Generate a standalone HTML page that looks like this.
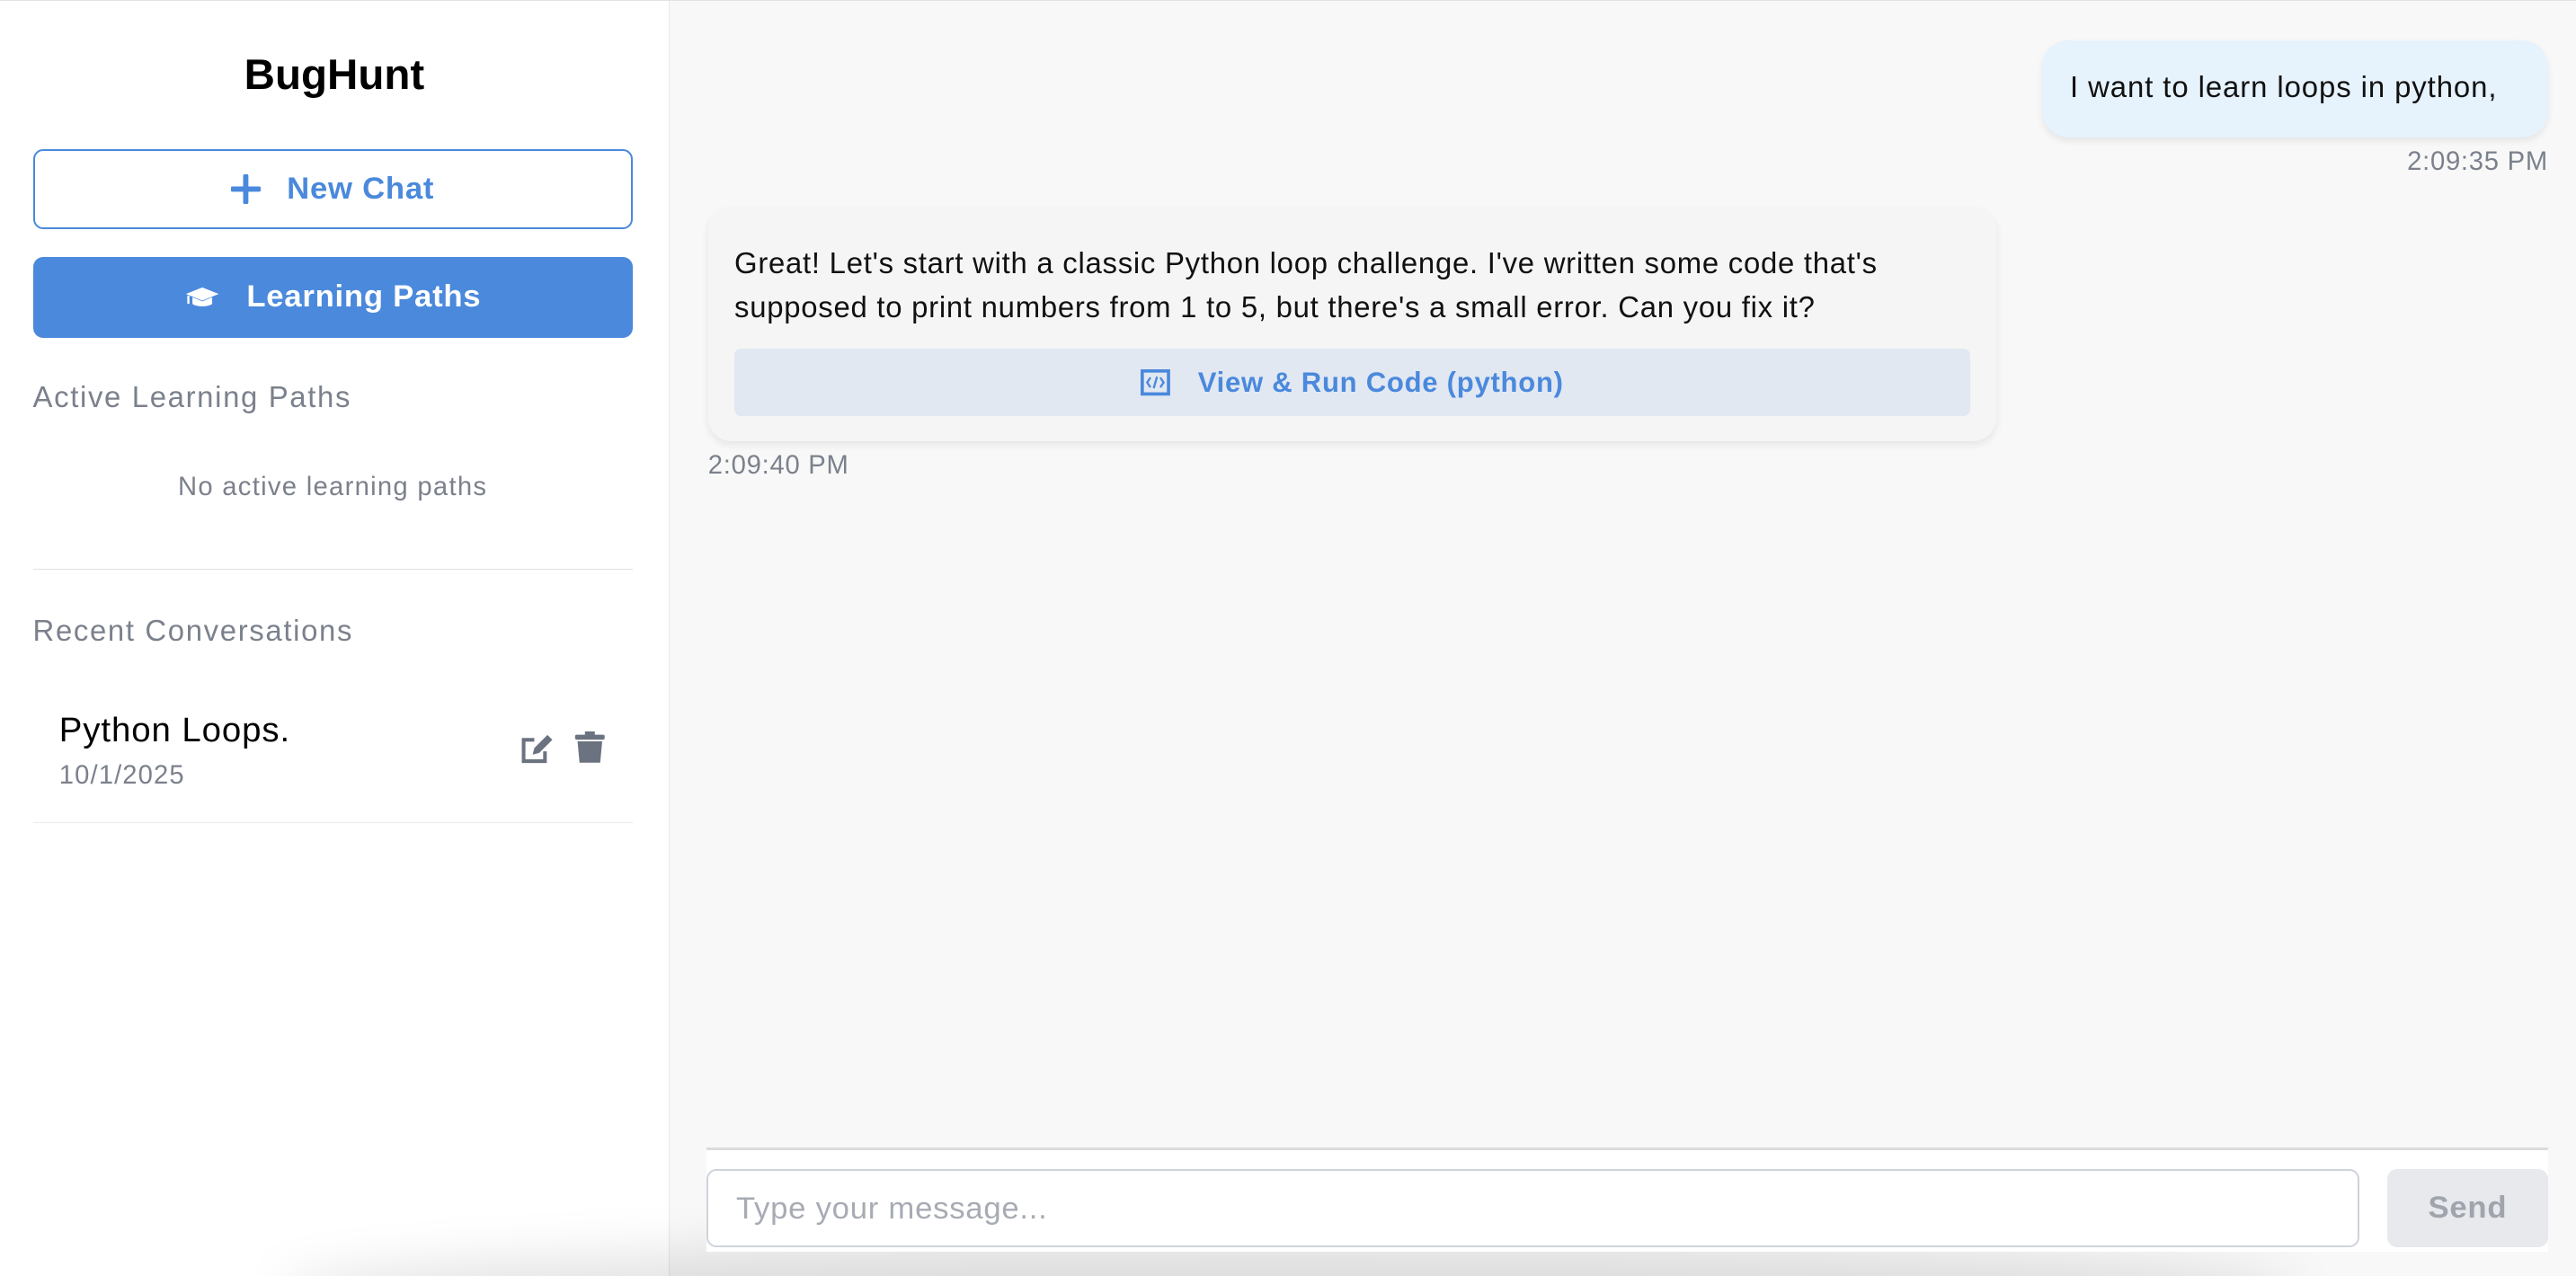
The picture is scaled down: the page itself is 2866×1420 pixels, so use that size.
<!DOCTYPE html>
<html><head><meta charset="utf-8"><style>
html,body{margin:0;padding:0;width:2866px;height:1420px;overflow:hidden;background:#f8f8f8}
#w{zoom:1.82781;width:1568px;height:777px;position:relative;overflow:hidden;font-family:"Liberation Sans",sans-serif;background:#f8f8f8;border-top:1px solid #e2e2e2;box-sizing:border-box;letter-spacing:0.4px}
.sb{position:absolute;left:0;top:0;width:407px;height:777px;background:#fff;border-right:1px solid #e8e8e8}
.a{position:absolute}
.btn{position:absolute;left:20px;width:365px;height:49px;box-sizing:border-box;border-radius:6px;display:flex;align-items:center;justify-content:center;font-size:19px;font-weight:bold}
.gray{color:#7b818c}
</style></head><body><div id="w">
<div class="sb">
<div class="a" style="left:0;width:407px;top:30px;text-align:center;font-size:26px;font-weight:bold;color:#000;letter-spacing:0">BugHunt</div>
<div class="btn" style="top:90px;border:1.5px solid #4a89dc;color:#4a89dc;background:#fff">
<svg width="18" height="18" viewBox="0 0 18 18" style="margin-right:16px"><path d="M9 1v16M1 9h16" stroke="#4a89dc" stroke-width="3.2" stroke-linecap="round"/></svg>New Chat</div>
<div class="btn" style="top:156px;background:#4a89dc;color:#fff">
<svg width="22" height="14" viewBox="0 0 22 14" style="margin-right:16px"><path d="M11 1L1 5l10 4 10-4z" fill="#fff"/><path d="M5 7v4c2 2 10 2 12 0V7l-6 2.5z" fill="#fff"/><path d="M2.5 6v5" stroke="#fff" stroke-width="1.3"/></svg>Learning Paths</div>
<div class="a gray" style="left:20px;top:231px;font-size:18px;letter-spacing:0.9px">Active Learning Paths</div>
<div class="a gray" style="left:0;width:405px;top:287px;font-size:16px;text-align:center;letter-spacing:0.7px">No active learning paths</div>
<div class="a" style="left:20px;top:346px;width:365px;border-top:1px solid #e2e2e2"></div>
<div class="a gray" style="left:20px;top:373px;font-size:18px;letter-spacing:0.9px">Recent Conversations</div>
<div class="a" style="left:36px;top:432px;font-size:21px;color:#000;letter-spacing:0.5px">Python Loops.</div>
<div class="a gray" style="left:36px;top:463px;font-size:16px;letter-spacing:0.6px">10/1/2025</div>
<svg class="a" style="left:316px;top:446px" width="21" height="19" viewBox="0 0 21 19"><path d="M9 4H2.5v13h13v-6" fill="none" stroke="#6b7280" stroke-width="2.2"/><path d="M8 13l1-4 8-8 3 3-8 8z" fill="#6b7280"/></svg>
<svg class="a" style="left:349px;top:445px" width="20" height="20" viewBox="0 0 20 20"><rect x="1" y="2" width="18" height="3" rx="1" fill="#6b7280"/><rect x="7" y="0" width="6" height="3" fill="#6b7280"/><path d="M2.5 6h15l-1.2 13H3.7z" fill="#6b7280"/></svg>
<div class="a" style="left:20px;top:500px;width:365px;border-top:1px solid #ececec"></div>
</div>
<div class="a" style="left:1243px;top:24px;width:308px;height:59px;background:#e6f2fc;border-radius:16px;box-shadow:0 2px 4px rgba(0,0,0,.08);box-sizing:border-box;padding:18px 0 0 17px;font-size:18px;color:#111;letter-spacing:0.5px;white-space:nowrap">I want to learn loops in python,</div>
<div class="a gray" style="right:17px;top:89px;font-size:16px">2:09:35 PM</div>
<div class="a" style="left:431px;top:126px;width:784px;height:142px;background:#f5f5f5;border-radius:14px;box-shadow:0 2px 5px rgba(0,0,0,.08);box-sizing:border-box;padding:20px 16px 0 16px;font-size:18px;line-height:27px;color:#111;white-space:nowrap">Great! Let's start with a classic Python loop challenge. I've written some code that's<br>supposed to print numbers from 1 to 5, but there's a small error. Can you fix it?
<div style="margin-top:12px;height:41px;background:#e2e8f2;border-radius:4px;display:flex;align-items:center;justify-content:center;color:#4a89dc;font-size:17px;font-weight:bold">
<svg width="18" height="16" viewBox="0 0 18 16" style="margin-right:17px"><rect x="1" y="1" width="16" height="14" fill="none" stroke="#4a89dc" stroke-width="2"/><path d="M6 5L4 8l2 3M12 5l2 3-2 3M10 4.5l-2 7" fill="none" stroke="#4a89dc" stroke-width="1.3"/></svg>View &amp; Run Code (python)</div></div>
<div class="a gray" style="left:431px;top:274px;font-size:16px">2:09:40 PM</div>
<div class="a" style="left:170px;top:755px;width:1230px;height:60px;border-radius:50%;background:rgba(0,0,0,.10);filter:blur(14px)"></div>
<div class="a" style="left:430px;top:698px;width:1121px;height:62px;background:#fff;border-top:2px solid #dcdcdc"></div>
<div class="a" style="left:430px;top:711px;width:1006px;height:48px;box-sizing:border-box;border:1.5px solid #cfd3da;border-radius:6px;background:#fff;padding:13px 0 0 17px;font-size:19px;color:#a7abb3">Type your message...</div>
<div class="a" style="left:1453px;top:711px;width:98px;height:48px;background:#e8e9ed;border-radius:6px;display:flex;align-items:center;justify-content:center;font-size:19px;font-weight:bold;color:#a0a4ad">Send</div>
</div></body></html>
